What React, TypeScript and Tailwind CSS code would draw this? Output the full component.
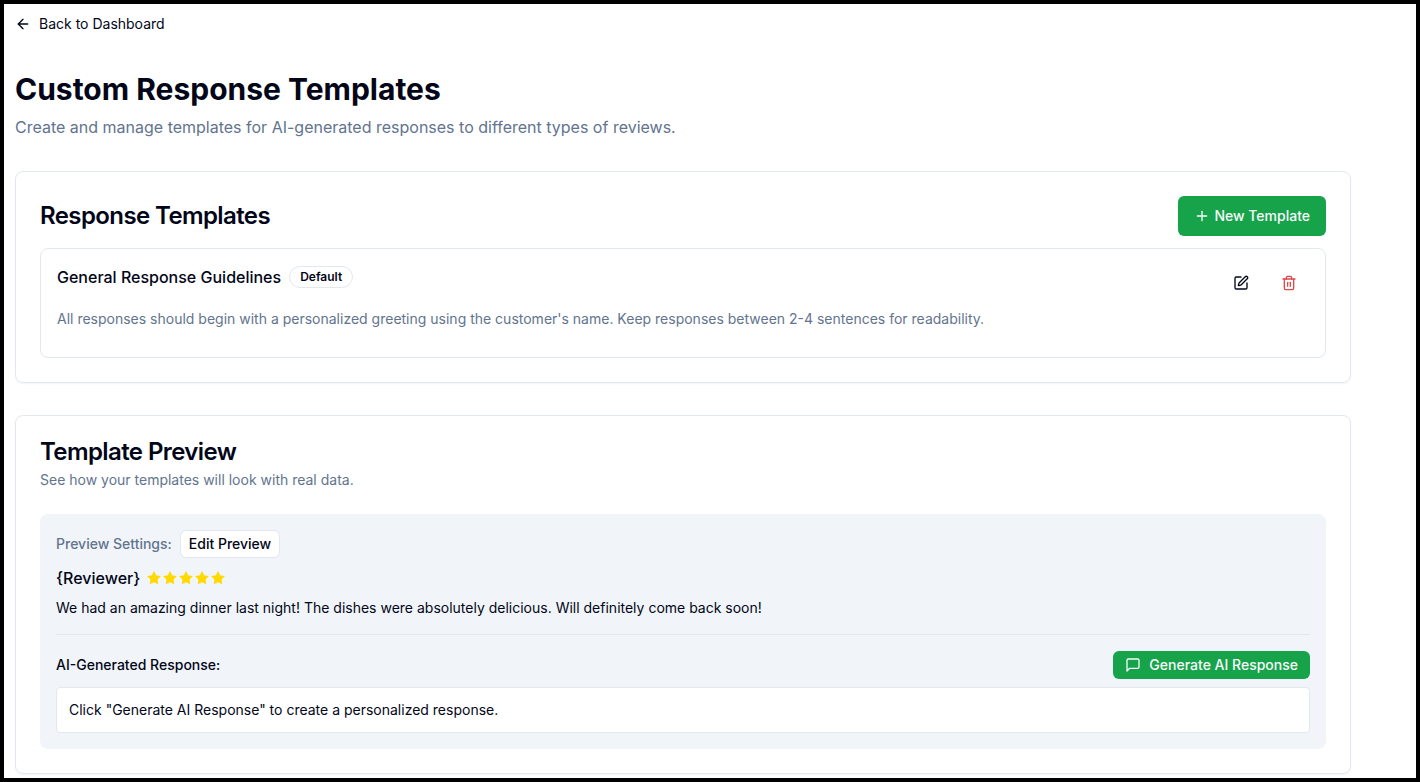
import React from 'react'
import { ArrowLeft, Plus, SquarePen, Star, Trash2 } from 'lucide-react'

interface Template {
  id: number
  name: string
  text: string
  isDefault: boolean
}

const templates: Template[] = [
  {
    id: 1,
    name: 'General Response Guidelines',
    text: "All responses should begin with a personalized greeting using the customer's name. Keep responses between 2-4 sentences for readability.",
    isDefault: true,
  },
]

const MessageIcon = () => (
  <svg
    width="16"
    height="16"
    viewBox="0 0 24 24"
    fill="none"
    stroke="currentColor"
    strokeWidth="2"
    strokeLinecap="round"
    strokeLinejoin="round"
    aria-hidden="true"
  >
    <path d="M21 15a2 2 0 0 1-2 2H7l-4 4V5a2 2 0 0 1 2-2h14a2 2 0 0 1 2 2z" />
  </svg>
)

const Stars = ({ rating }: { rating: number }) => (
  <div className="flex" role="img" aria-label={`${rating} stars`}>
    {Array.from({ length: rating }, (_, i) => (
      <Star key={i} size={16} strokeWidth={0} className="fill-[#ffd900]" />
    ))}
  </div>
)

const TemplateRow = ({ template }: { template: Template }) => (
  <li className="rounded-lg border border-slate-200 p-4">
    <div className="flex items-start justify-between">
      <div className="flex items-center gap-2">
        <h3 className="font-medium">{template.name}</h3>
        {template.isDefault && (
          <span className="rounded-full border border-slate-200 px-2.5 py-0.5 text-xs font-semibold">
            Default
          </span>
        )}
      </div>
      <div className="flex gap-2">
        <button type="button" aria-label="Edit template" className="flex h-9 w-10 items-center justify-center rounded-md">
          <SquarePen size={16} />
        </button>
        <button type="button" aria-label="Delete template" className="flex h-9 w-10 items-center justify-center rounded-md text-[#e04848]">
          <Trash2 size={16} />
        </button>
      </div>
    </div>
    <p className="mt-2 mb-3 text-sm text-slate-500">{template.text}</p>
  </li>
)

const App = () => {
  return (
    <div className="min-h-screen border-4 border-black bg-white pt-1 pr-[65px] pl-[11px] font-[Inter,sans-serif] text-slate-950">
      <a href="#" className="flex h-8 w-fit items-center gap-2 text-sm">
        <ArrowLeft size={16} />
        Back to Dashboard
      </a>

      <header className="mt-[31px] mb-8">
        <h1 className="mb-2 text-3xl font-bold">Custom Response Templates</h1>
        <p className="text-slate-500">
          Create and manage templates for AI-generated responses to different types of reviews.
        </p>
      </header>

      <main className="flex flex-col gap-8">
        <section className="rounded-lg border border-slate-200 p-6 shadow-xs">
          <div className="mb-3 flex items-center justify-between">
            <h2 className="text-2xl font-semibold tracking-tight">Response Templates</h2>
            <button type="button" className="flex h-10 items-center gap-1 rounded-md bg-[#16a34a] px-4 text-sm font-medium text-slate-50">
              <Plus size={16} />
              New Template
            </button>
          </div>
          <ul>
            {templates.map((template) => (
              <TemplateRow key={template.id} template={template} />
            ))}
          </ul>
        </section>

        <section className="rounded-lg border border-slate-200 p-6 shadow-xs">
          <h2 className="text-2xl leading-6 font-semibold tracking-tight">Template Preview</h2>
          <p className="mt-1.5 text-sm text-slate-500">See how your templates will look with real data.</p>

          <div className="mt-6 rounded-lg bg-slate-100 p-4">
            <div className="mb-2 flex items-center gap-2">
              <span className="text-sm font-medium text-slate-500">Preview Settings:</span>
              <button type="button" className="h-7 rounded-md border border-slate-200 bg-white px-2 text-sm font-medium">
                Edit Preview
              </button>
            </div>
            <div className="flex items-center gap-1.5">
              <span className="font-medium">{'{Reviewer}'}</span>
              <Stars rating={5} />
            </div>
            <p className="mt-2 text-sm">
              We had an amazing dinner last night! The dishes were absolutely delicious. Will definitely come back soon!
            </p>

            <div className="mt-4 border-t border-slate-200 pt-4">
              <div className="mb-2 flex items-center justify-between">
                <h3 className="text-sm font-medium">AI-Generated Response:</h3>
                <button type="button" className="flex h-7 items-center gap-2 rounded-md bg-[#16a34a] px-3 text-sm font-medium text-slate-50">
                  <MessageIcon />
                  Generate AI Response
                </button>
              </div>
              <div className="rounded border border-slate-200 bg-white p-3 text-sm">
                Click "Generate AI Response" to create a personalized response.
              </div>
            </div>
          </div>
        </section>
      </main>
    </div>
  )
}

export default App
